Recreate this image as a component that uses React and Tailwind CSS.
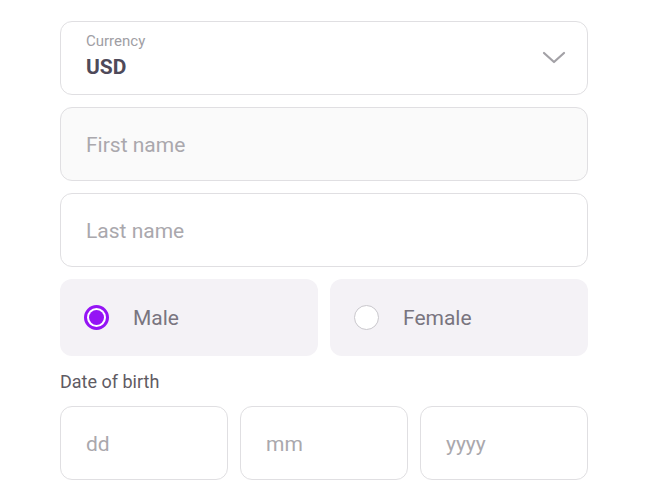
import React from "react";

function TextBox({ placeholder, bg = "bg-white" }) {
  return (
    <div className={`h-[74px] rounded-xl border border-[#e0dfe2] ${bg} flex items-center px-[25px]`}>
      <span className="text-[21px] leading-[28px] mt-[1px] text-[#aaa8ad]">{placeholder}</span>
    </div>
  );
}

export default function App() {
  return (
    <div className="w-[648px] h-[500px] bg-white overflow-hidden" style={{ fontFamily: "Roboto, 'Liberation Sans', sans-serif" }}>
      <div className="ml-[60px] w-[528px] pt-[21px] flex flex-col gap-3">
        <div className="h-[74px] rounded-xl border border-[#e0dfe2] bg-white flex items-center justify-between pl-[25px] pr-[21px]">
          <div className="flex flex-col">
            <span className="text-[15px] leading-[20px] text-[#a09ea4] mt-[-4px]">Currency</span>
            <span className="text-[21px] leading-[28px] font-bold text-[#4f4a5a] mt-[2px]">USD</span>
          </div>
          <svg width="24" height="14" viewBox="0 0 24 14" fill="none">
            <path d="M2 2 L12 11 L22 2" stroke="#a3a1a6" strokeWidth="2.2" strokeLinecap="round" strokeLinejoin="round" />
          </svg>
        </div>
        <TextBox placeholder="First name" bg="bg-[#fafafa]" />
        <TextBox placeholder="Last name" />
        <div className="grid grid-cols-2 gap-3">
          <div className="h-[77px] rounded-xl bg-[#f4f2f6] flex items-center pl-6 gap-6">
            <div className="w-[25px] h-[25px] rounded-full border-[3px] border-[#9514f5] bg-white flex items-center justify-center">
              <div className="w-[15px] h-[15px] rounded-full bg-[#9514f5]" />
            </div>
            <span className="text-[21px] leading-[28px] text-[#79757f]">Male</span>
          </div>
          <div className="h-[77px] rounded-xl bg-[#f4f2f6] flex items-center pl-6 gap-6">
            <div className="w-[25px] h-[25px] rounded-full border border-[#c9c7cc] bg-white" />
            <span className="text-[21px] leading-[28px] text-[#79757f]">Female</span>
          </div>
        </div>
        <div className="text-[18px] leading-[24px] text-[#5f5b63] mt-[2px]">Date of birth</div>
        <div className="grid grid-cols-3 gap-3">
          <TextBox placeholder="dd" />
          <TextBox placeholder="mm" />
          <TextBox placeholder="yyyy" />
        </div>
      </div>
    </div>
  );
}
